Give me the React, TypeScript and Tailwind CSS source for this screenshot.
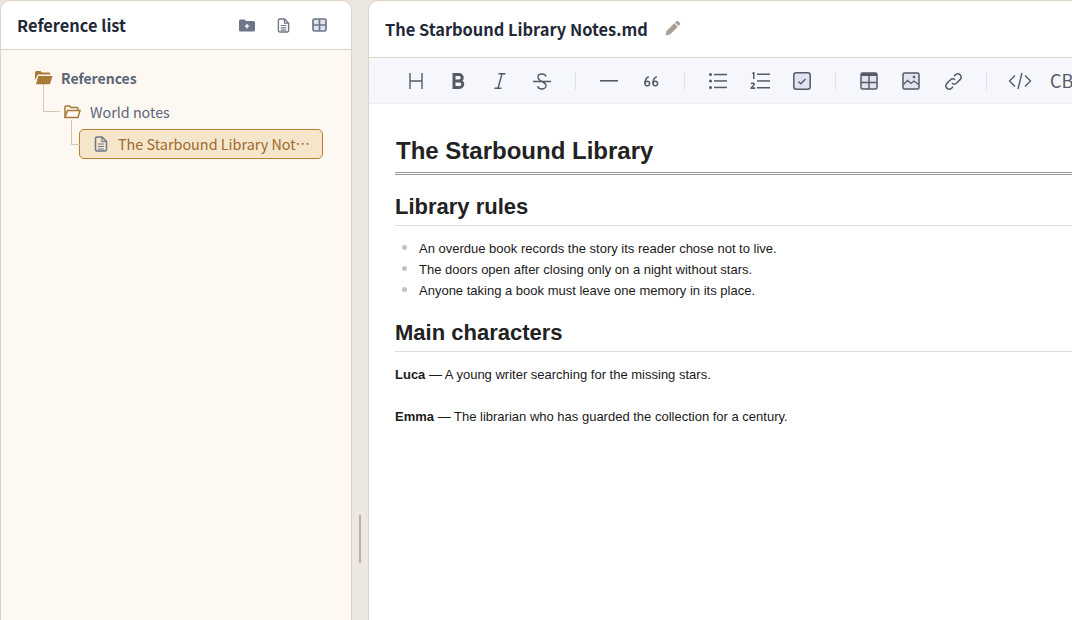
import React from 'react';

const ui = { fontFamily: '"Noto Sans CJK SC", "Noto Sans", sans-serif' };

const Sep = () => <span className="w-px h-[18px] mx-[3px] bg-[#dfe2ea] shrink-0" />;

const Tool: React.FC<{ children: React.ReactNode }> = ({ children }) => (
  <span className="w-6 h-6 flex items-center justify-center shrink-0 text-[#555a66]">{children}</span>
);

const DocIcon = ({ w = 14, h = 16 }: { w?: number; h?: number }) => (
  <svg width={w} height={h} viewBox="0 0 14 16" fill="none" stroke="#6f7488" strokeWidth="1.5">
    <path d="M1.5 2.500a1.500 1.500 0 0 1 1.500-1.500h5l4.500 4.500v8a1.500 1.500 0 0 1-1.500 1.500h-8a1.500 1.500 0 0 1-1.500-1.500z" />
    <path d="M8 1v4.500h4.500M4 8h6M4 10.500h6M4 13h6" strokeWidth="1.200" />
  </svg>
);

const Rule: React.FC<{ children: React.ReactNode }> = ({ children }) => (
  <li className="flex items-center gap-[12px]">
    <span className="w-[5px] h-[5px] ml-[7px] mb-[2px] rounded-full bg-[#c4c4c4] shrink-0" />
    {children}
  </li>
);

export default function App() {
  return (
    <div className="w-[1072px] h-[620px] overflow-hidden flex bg-[#ece7e0]" style={ui}>
      <aside className="w-[352px] h-[620px] shrink-0 flex flex-col bg-[#fdf8f2] border border-b-0 border-[#ddd3c5] rounded-t-[10px] overflow-hidden">
        <header className="h-[49px] shrink-0 bg-white border-b border-[#ddd3c5] flex items-center pl-4 pr-[24px]">
          <h1 className="text-[16.4px] font-semibold text-[#1f2937] flex-1 leading-none">Reference list</h1>
          <div className="flex items-center gap-[22px]">
            <svg width="16" height="13" viewBox="0 0 16 13">
              <path d="M0 2a1.500 1.500 0 0 1 1.500-1.500h4L7 2h7.500A1.500 1.500 0 0 1 16 3.500v7.500a1.500 1.500 0 0 1-1.500 1.500h-13A1.500 1.500 0 0 1 0 11z" fill="#6f7488" />
              <path d="M8 5v4.500M5.800 7.200h4.400" stroke="#fff" strokeWidth="1.300" />
            </svg>
            <DocIcon w={13} h={15} />
            <svg width="15" height="14" viewBox="0 0 15 14" fill="#dfe3ee" stroke="#6f7488" strokeWidth="1.700">
              <rect x="1" y="1" width="13" height="12" rx="1.500" />
              <path d="M7.500 1v12M1 7h13" />
            </svg>
          </div>
        </header>
        <div className="relative flex-1">
          {/* tree guide lines */}
          <span className="absolute left-[42px] top-[34px] w-[17px] h-[28px] border-l border-b border-[#d3c6b2]" />
          <span className="absolute left-[70px] top-[70px] w-[9px] h-[25px] border-l border-b border-[#d3c6b2]" />
          <div className="pl-[34px] pt-[19px] flex flex-col">
            <div className="h-[18px] flex items-center gap-[8px]">
              <svg width="18" height="14" viewBox="0 0 18 14" fill="#a87a38">
                <path d="M0 1.500A1.500 1.500 0 0 1 1.500 0h4L7 1.500h7A1.500 1.500 0 0 1 15.500 3v.5H3L0 9z" />
                <path d="M3.200 5h14.300l-2.300 7.500a1 1 0 0 1-1 .8H1z" />
              </svg>
              <span className="text-[14px] font-semibold text-[#5c6478] leading-none">References</span>
            </div>
            <div className="h-[18px] mt-[16px] ml-[29px] flex items-center gap-[9px]">
              <svg width="17" height="14" viewBox="0 0 17 14" fill="none" stroke="#a87a38" strokeWidth="1.500">
                <path d="M1 12V2a1 1 0 0 1 1-1h3.500L7 2.500h6a1 1 0 0 1 1 1V5" />
                <path d="M3.500 5.500H16l-2 7H1z" />
              </svg>
              <span className="text-[14.3px] text-[#5c6478] leading-none">World notes</span>
            </div>
            <div className="h-[30px] w-[244px] mt-[8px] ml-[44px] flex items-center pl-[14px] pr-[12px] gap-[10px] rounded-[5px] border border-[#bd7f2e] bg-[#f5e5cb]">
              <DocIcon />
              <span className="text-[14.4px] text-[#9c6a2c] leading-[20px] whitespace-nowrap overflow-hidden text-ellipsis flex-1">The Starbound Library Notes.md</span>
            </div>
          </div>
        </div>
      </aside>

      <div className="w-[16px] shrink-0 flex items-end justify-center pb-[57px]">
        <span className="w-[2px] h-[48px] bg-[#bcaf9f] block" />
      </div>

      <main className="flex-1 min-w-0 h-[620px] flex flex-col bg-white border-l border-t border-[#ddd3c5] rounded-tl-[10px] overflow-hidden">
        <div className="h-[57px] shrink-0 flex items-center pl-4 gap-[17px] border-b border-[#ddd3c5]">
          <h2 className="text-[16.4px] font-semibold text-[#1f2937] leading-none">The Starbound Library Notes.md</h2>
          <svg width="16" height="16" viewBox="0 0 16 16" fill="#a89f92" className="-mt-[2px]">
            <path d="M11.200 1.200a1.400 1.400 0 0 1 2 0l1.600 1.600a1.400 1.400 0 0 1 0 2L13.600 6 10 2.400zM9.200 3.200l3.600 3.600L5 14.600l-4.400.9.9-4.400z" />
          </svg>
        </div>
        <div className="h-[46px] shrink-0 bg-[#f6f7fc] border-b border-[#eeeef0] flex items-center pl-[35px] pt-[1px] gap-[18px] overflow-hidden">
          <Tool>
            <svg width="16" height="16" viewBox="0 0 16 16" fill="none" stroke="currentColor" strokeWidth="1.400"><path d="M2 0v16M14 0v16M2 8h12" /></svg>
          </Tool>
          <Tool>
            <svg width="13" height="16" viewBox="0 0 13 16" fill="none" stroke="currentColor" strokeWidth="3"><path d="M2 1.500v13h5.500a3.200 3.200 0 0 0 0-6.500H2h5a3.200 3.200 0 0 0 0-6.500z" /></svg>
          </Tool>
          <Tool>
            <svg width="12" height="16" viewBox="0 0 12 16" fill="none" stroke="currentColor" strokeWidth="1.400"><path d="M4.500 .7h7M.5 15.300h7M8 .7 4 15.300" /></svg>
          </Tool>
          <Tool>
            <svg width="18" height="17" viewBox="0 0 18 17" fill="none" stroke="currentColor" strokeWidth="1.400"><path d="M0 8.500h18M13 3.500C12.500 2 11 1 9 1 6.500 1 5 2.300 5 4c0 2 2 3.500 4 4.500s4 2 4 4c0 1.800-1.700 3.500-4 3.500-2.200 0-3.800-1-4.300-2.700" /></svg>
          </Tool>
          <Sep />
          <Tool>
            <svg width="18" height="2" viewBox="0 0 18 2" fill="currentColor"><rect width="18" height="1.600" /></svg>
          </Tool>
          <Tool>
            <svg width="15" height="11" viewBox="0 0 15 11" fill="none" stroke="currentColor" strokeWidth="1.500"><circle cx="3.300" cy="7.500" r="2.300" /><path d="M1 7.500C1 4 2.500 1.500 4.800 .8" /><circle cx="11.300" cy="7.500" r="2.300" /><path d="M9 7.500C9 4 10.500 1.500 12.800 .8" /></svg>
          </Tool>
          <Sep />
          <Tool>
            <svg width="18" height="16" viewBox="0 0 18 16" fill="currentColor"><circle cx="1.500" cy="1.500" r="1.500" /><circle cx="1.500" cy="8" r="1.500" /><circle cx="1.500" cy="14.500" r="1.500" /><rect x="5" y=".8" width="13" height="1.500" /><rect x="5" y="7.200" width="13" height="1.500" /><rect x="5" y="13.700" width="13" height="1.500" /></svg>
          </Tool>
          <Tool>
            <svg width="20" height="18" viewBox="0 0 20 18" fill="currentColor"><rect x="7" y="1.500" width="13" height="1.500" /><rect x="7" y="8.200" width="13" height="1.500" /><rect x="7" y="15" width="13" height="1.500" /><path d="M1.500 1.500 3.500 0H4.500V7H3V2z" /><path d="M.5 11.500C1 10 5 10 5 12.300c0 1.200-1.500 2-2.500 3H5.200V17H.5V15.700l2.500-2.800c.6-.8-.8-1.400-1.300-.6z" /></svg>
          </Tool>
          <Tool>
            <svg width="18" height="18" viewBox="0 0 18 18"><rect x=".8" y=".8" width="16.400" height="16.400" rx="2.500" fill="#e0e4f0" stroke="currentColor" strokeWidth="1.500" /><path d="M5.500 9.500l2.300 2.300 4.700-4.800" fill="none" stroke="currentColor" strokeWidth="1.400" /></svg>
          </Tool>
          <Sep />
          <Tool>
            <svg width="18" height="18" viewBox="0 0 18 18"><rect x="1" y="1" width="16" height="16" rx="1.500" fill="#e0e4f0" stroke="currentColor" strokeWidth="1.500" /><path d="M1 1h16v3H1z" fill="currentColor" /><path d="M9 4v13M1 10.500h16" stroke="currentColor" strokeWidth="1.400" /></svg>
          </Tool>
          <Tool>
            <svg width="18" height="18" viewBox="0 0 18 18"><rect x="1" y="1" width="16" height="16" rx="1.500" fill="#e0e4f0" stroke="currentColor" strokeWidth="1.500" /><path d="M1.500 12.500l4-4 3.500 3 3-2.500 4.500 3.500" fill="none" stroke="currentColor" strokeWidth="1.300" /><circle cx="12" cy="5" r="1.300" fill="currentColor" /></svg>
          </Tool>
          <Tool>
            <svg width="19" height="19" viewBox="0 0 18 18" fill="none" stroke="currentColor" strokeWidth="1.400"><path d="M7.500 10.500a3.200 3.200 0 0 0 4.500 0l3.500-3.500a3.200 3.200 0 0 0-4.500-4.500L9.500 4" /><path d="M10.500 7.500a3.200 3.200 0 0 0-4.500 0L2.500 11a3.200 3.200 0 0 0 4.500 4.500L8.500 14" /></svg>
          </Tool>
          <Sep />
          <Tool>
            <svg width="24" height="18" viewBox="0 0 24 18" fill="none" stroke="currentColor" strokeWidth="1.400"><path d="M7 3.500 1.500 9 7 14.500M17 3.500 22.500 9 17 14.500M14 1 10 17" /></svg>
          </Tool>
          <span className="text-[18px] text-[#555a66] leading-none shrink-0 mb-[2px]">CB</span>
        </div>
        <article className="pl-[26px] pt-[33px] text-[13px] text-[#1a1a1a]" style={{ fontFamily: '"Liberation Sans", Arial, sans-serif' }}>
          <h1 className="text-[24px] font-bold leading-[28px] text-[#222] pl-px pb-[7px] border-b-[3px] border-double border-[#999]">The Starbound Library</h1>
          <h2 className="text-[22px] font-bold leading-[26px] text-[#222] mt-[19px] pb-[5px] border-b border-[#ddd]">Library rules</h2>
          <ul className="mt-[12px] leading-[21px]">
            <Rule>An overdue book records the story its reader chose not to live.</Rule>
            <Rule>The doors open after closing only on a night without stars.</Rule>
            <Rule>Anyone taking a book must leave one memory in its place.</Rule>
          </ul>
          <h2 className="text-[22px] font-bold leading-[26px] text-[#222] mt-[19px] pb-[5px] border-b border-[#ddd]">Main characters</h2>
          <p className="mt-[12px] leading-[21px]"><strong>Luca</strong> — A young writer searching for the missing stars.</p>
          <p className="mt-[21px] leading-[21px]"><strong>Emma</strong> — The librarian who has guarded the collection for a century.</p>
        </article>
      </main>
    </div>
  );
}
